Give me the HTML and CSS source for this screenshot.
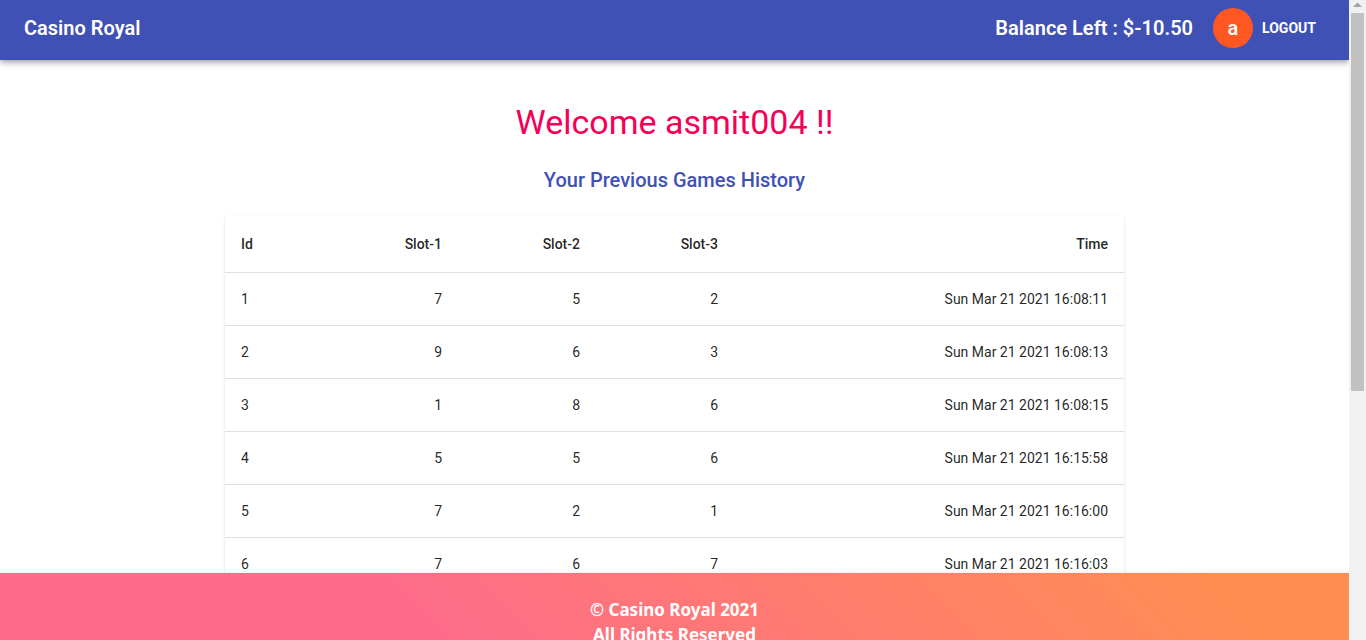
FILE: index.html
```html
<!DOCTYPE html>
<html lang="en">
<head>
<meta charset="utf-8">
<title>Casino Royal</title>
<link rel="stylesheet" href="styles.css">
</head>
<body>
<div class="page">
  <header class="app-bar">
    <h1 class="brand">Casino Royal</h1>
    <span class="balance">Balance Left : $-10.50</span>
    <span class="avatar">a</span>
    <button class="logout" type="button">LOGOUT</button>
  </header>
  <main class="content">
    <h2 class="welcome">Welcome asmit004 !!</h2>
    <h3 class="subtitle">Your Previous Games History</h3>
    <div class="card">
      <table class="history">
        <colgroup>
          <col class="col-id">
          <col class="col-slot" span="3">
          <col>
        </colgroup>
        <thead>
          <tr><th>Id</th><th>Slot-1</th><th>Slot-2</th><th>Slot-3</th><th>Time</th></tr>
        </thead>
        <tbody>
          <tr><td>1</td><td>7</td><td>5</td><td>2</td><td>Sun Mar 21 2021 16:08:11</td></tr>
          <tr><td>2</td><td>9</td><td>6</td><td>3</td><td>Sun Mar 21 2021 16:08:13</td></tr>
          <tr><td>3</td><td>1</td><td>8</td><td>6</td><td>Sun Mar 21 2021 16:08:15</td></tr>
          <tr><td>4</td><td>5</td><td>5</td><td>6</td><td>Sun Mar 21 2021 16:15:58</td></tr>
          <tr><td>5</td><td>7</td><td>2</td><td>1</td><td>Sun Mar 21 2021 16:16:00</td></tr>
          <tr><td>6</td><td>7</td><td>6</td><td>7</td><td>Sun Mar 21 2021 16:16:03</td></tr>
        </tbody>
      </table>
    </div>
  </main>
  <footer class="footer">
    <p class="footer-line">© Casino Royal 2021</p>
    <p class="footer-line">All Rights Reserved</p>
  </footer>
</div>
<div class="scrollbar" aria-hidden="true">
  <svg class="scroll-arrow" width="17" height="13" viewBox="0 0 17 13"><path d="M4 7h9L8.500 2.500z" fill="#a3a3a3"/></svg>
  <div class="scroll-thumb"></div>
</div>
</body>
</html>
```

FILE: styles.css
```css
* {
  box-sizing: border-box;
}

body {
  margin: 0;
  height: 100vh;
  display: flex;
  overflow: hidden;
  background: #fff;
  color: rgba(0, 0, 0, 0.87);
  font-family: Roboto, "Liberation Sans", sans-serif;
}

.page {
  flex: 1;
  min-width: 0;
  display: flex;
  flex-direction: column;
}

.app-bar {
  display: flex;
  align-items: center;
  padding: 8px 24px 12px;
  background: #3f51b5;
  color: #fff;
  box-shadow: 0 2px 4px -1px rgba(0, 0, 0, 0.2), 0 4px 5px 0 rgba(0, 0, 0, 0.14), 0 1px 10px 0 rgba(0, 0, 0, 0.12);
  z-index: 1;
}

.brand,
.balance {
  margin: 0;
  font-size: 20px;
  font-weight: 600;
  line-height: 32px;
}

.brand {
  flex: 1;
}

.avatar {
  display: flex;
  align-items: center;
  justify-content: center;
  width: 40px;
  height: 40px;
  margin-left: 20px;
  border-radius: 50%;
  background: #ff5722;
  font-size: 20px;
  font-weight: 500;
}

.logout {
  min-width: 72px;
  padding: 6px 8px;
  border: 0;
  background: transparent;
  color: inherit;
  font: 700 14px/24px Roboto, "Liberation Sans", sans-serif;
}

.content {
  flex: 1;
  min-height: 0;
  overflow: hidden;
  display: flex;
  flex-direction: column;
  align-items: center;
}

.welcome {
  margin: 40px 0 0;
  color: #f50057;
  font-size: 34px;
  font-weight: 400;
  line-height: 44px;
}

.subtitle {
  margin: 20px 0;
  color: #3f51b5;
  font-size: 20px;
  font-weight: 500;
  line-height: 32px;
}

.card {
  width: 100%;
  max-width: 899px;
  border-radius: 4px;
  box-shadow: 0 2px 1px -1px rgba(0, 0, 0, 0.2), 0 1px 1px 0 rgba(0, 0, 0, 0.14), 0 1px 3px 0 rgba(0, 0, 0, 0.12);
}

.history {
  width: 100%;
  table-layout: fixed;
  border-collapse: separate;
  border-spacing: 0;
  font-size: 14px;
  line-height: 20px;
}

.col-id {
  width: 95px;
}

.col-slot {
  width: 138px;
}

.history th,
.history td {
  padding: 16px;
  border-bottom: 1px solid #e0e0e0;
  text-align: right;
}

.history th {
  font-weight: 500;
  line-height: 24px;
}

.history th:first-child,
.history td:first-child {
  text-align: left;
}

.footer {
  height: 67px;
  padding-top: 24px;
  background: linear-gradient(45deg, #fe6b8b 30%, #ff8e53 90%);
  box-shadow: 0 3px 5px 2px rgba(255, 105, 135, 0.3);
  color: #fff;
  text-align: center;
  font: 700 17px/25px "Noto Sans", "Open Sans", sans-serif;
}

.footer-line {
  margin: 0;
}

.scrollbar {
  width: 17px;
  background: #f1f1f1;
  z-index: 1;
}

.scroll-arrow {
  display: block;
}

.scroll-thumb {
  width: 13px;
  height: 59%;
  margin: 0 auto;
  background: #c1c1c1;
}
```
